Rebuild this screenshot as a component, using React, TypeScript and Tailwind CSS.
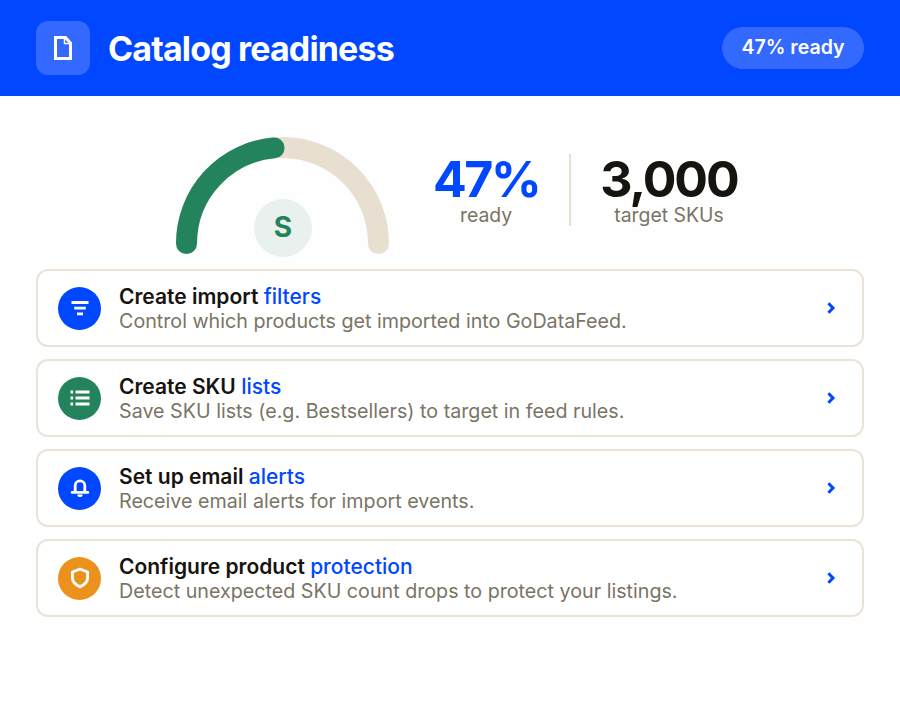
import React from "react";

const font = { fontFamily: "Inter, 'Liberation Sans', sans-serif" };

function Chevron() {
  return (
    <svg width="16" height="16" viewBox="0 0 16 16" fill="none" stroke="#0047ff" strokeWidth="3" strokeLinecap="butt" strokeLinejoin="miter">
      <path d="M5.4 3.2 10 8 5.4 12.8" />
    </svg>
  );
}

function FilterIcon() {
  return (
    <svg width="20" height="20" viewBox="0 0 20 20" fill="none" stroke="#fff" strokeWidth="2.8">
      <path d="M1.5 4.5h17M4.2 10.2h11.6M7 15.9h6" />
    </svg>
  );
}

function ListIcon() {
  return (
    <svg width="22" height="22" viewBox="0 0 22 22" fill="none" stroke="#fff" strokeWidth="2.8">
      <path d="M6.5 5h14M6.5 11h14M6.5 17h14" />
      <path d="M1.5 5h2.6M1.5 11h2.6M1.5 17h2.6" />
    </svg>
  );
}

function BellIcon() {
  return (
    <svg width="20" height="20" viewBox="0 0 20 20" fill="none">
      <path d="M5.2 14.2V7.6a4.8 4.8 0 0 1 9.6 0v6.6" stroke="#fff" strokeWidth="2.8" />
      <path d="M2.2 14.4h15.6" stroke="#fff" strokeWidth="2.8" strokeLinecap="round" />
      <path d="M7.4 16.4h5.2a2.6 2.6 0 0 1-5.2 0z" fill="#fff" />
    </svg>
  );
}

function ShieldIcon() {
  return (
    <svg width="22" height="22" viewBox="0 0 22 22" fill="none" stroke="#fff" strokeWidth="2.9" strokeLinejoin="round">
      <path d="M11 2.2 18.6 5v5.6c0 4.4-3.2 7.4-7.6 9.2-4.4-1.8-7.6-4.8-7.6-9.2V5z" />
    </svg>
  );
}

const rows = [
  { bold: "Create import ", accent: "filters", desc: "Control which products get imported into GoDataFeed.", bg: "bg-[#0047ff]", icon: <FilterIcon /> },
  { bold: "Create SKU ", accent: "lists", desc: "Save SKU lists (e.g. Bestsellers) to target in feed rules.", bg: "bg-[#22835c]", icon: <ListIcon /> },
  { bold: "Set up email ", accent: "alerts", desc: "Receive email alerts for import events.", bg: "bg-[#0047ff]", icon: <BellIcon /> },
  { bold: "Configure product ", accent: "protection", desc: "Detect unexpected SKU count drops to protect your listings.", bg: "bg-[#ec921c]", icon: <ShieldIcon /> },
];

export default function App() {
  return (
    <div className="w-[900px] h-[720px] bg-[#fefefe] overflow-hidden" style={font}>
      <header className="h-[96px] bg-[#0047ff] flex items-center justify-between px-9">
        <div className="flex items-center gap-[18px]">
          <div className="w-[54px] h-[54px] rounded-xl bg-[#3369ff] flex items-center justify-center">
            <svg width="24" height="28" viewBox="0 0 24 28" fill="none" stroke="#fff" strokeWidth="3" strokeLinejoin="miter">
              <path d="M4.5 3.5h10l5 5.5v15.5h-15z" />
              <path d="M13.5 3.5v6h6" strokeWidth="1.5" />
            </svg>
          </div>
          <h1 className="text-[34px] leading-9 mt-[1px] font-bold text-white tracking-[-0.85px]">Catalog readiness</h1>
        </div>
        <div className="h-[42px] w-[142px] rounded-full bg-[#3369ff] flex items-center justify-center text-white text-[19.6px] font-semibold">
          47% ready
        </div>
      </header>

      <section className="h-[173px] flex items-start pl-[176px] pt-[40px]">
        <div className="relative w-[213px] h-[118px] shrink-0">
          <svg width="213" height="118" viewBox="0 0 213 118" fill="none" strokeWidth="21" strokeLinecap="round">
            <path d="M10.5 107.5a96 96 0 0 1 192 0" stroke="#e9dfd1" />
            <path d="M10.5 107.5A96 96 0 0 1 98 11.9" stroke="#22835c" />
          </svg>
          <div className="absolute left-[78px] top-[63px] w-[58px] h-[58px] rounded-full bg-[#e9f1ef] flex items-center justify-center text-[#22835c] text-[28px] font-bold pb-[2px]">
            S
          </div>
        </div>
        <div className="ml-[44px] mt-[18px] flex items-center">
          <div className="flex flex-col items-center">
            <div className="text-[50px] leading-[50px] font-bold text-[#0047ff] tracking-[-2.5px]">47%</div>
            <div className="text-[19.4px] leading-[22px] text-[#7a7464]">ready</div>
          </div>
          <div className="w-[2px] h-[72px] bg-[#e9dfd1] ml-[30px] mr-[29px]" />
          <div className="flex flex-col items-center">
            <div className="text-[50px] leading-[50px] font-bold text-[#17130f] tracking-[-2px]">3,000</div>
            <div className="text-[19.4px] leading-[22px] text-[#7a7464]">target SKUs</div>
          </div>
        </div>
      </section>

      <div className="flex flex-col gap-3 px-9">
        {rows.map((r) => (
          <div key={r.accent} className="h-[78px] rounded-xl border-2 border-[#ebe3d7] bg-white flex items-center pl-5 pr-[23px]">
            <div className={`w-[43px] h-[43px] rounded-full flex items-center justify-center shrink-0 ${r.bg}`}>
              {r.icon}
            </div>
            <div className="ml-[18px] flex-1">
              <div className="text-[21px] leading-6 font-semibold text-[#17130f] mt-[2px]">
                {r.bold}
                <span className="text-[#0047ff] font-medium">{r.accent}</span>
              </div>
              <div className="text-[19.7px] leading-6 text-[#7a7464]">{r.desc}</div>
            </div>
            <Chevron />
          </div>
        ))}
      </div>
    </div>
  );
}
